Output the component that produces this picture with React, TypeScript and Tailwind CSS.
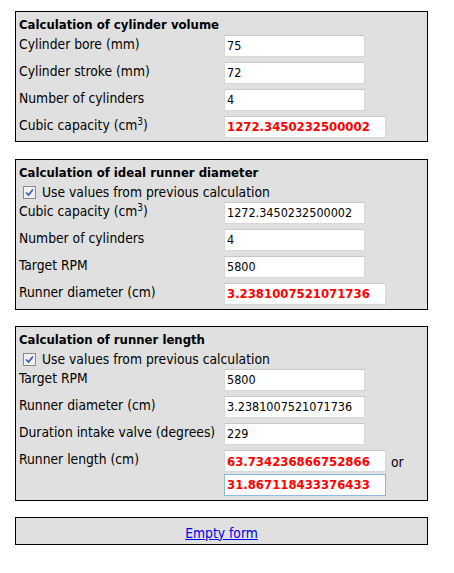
const font = { fontFamily: '"DejaVu Sans Condensed", "Noto Sans", sans-serif' }

type Row = { label: React.ReactNode; value: string; result?: boolean }

function Cm3({ text }: { text: string }) {
    return (
        <>
            {text} (cm<span className="relative -top-[5px] text-[10px] leading-none">3</span>)
        </>
    )
}

function Field({ value, result, focused }: { value: string; result?: boolean; focused?: boolean }) {
    return (
        <div
            className={`h-[22px] flex items-center pl-[2px] bg-white border ${
                focused ? 'border-[#8fb8e0]' : 'border-[#d8d8d8] border-t-[#c8c8c8]'
            } ${result ? 'w-[162px] text-[#ff0000] font-bold text-[13px]' : 'w-[141px] text-black text-[12.5px]'}`}
        >
            {value}
        </div>
    )
}

function Checkbox({ label }: { label: string }) {
    return (
        <div className="flex items-center h-[19px] pl-[4px]">
            <span className="w-[13px] h-[13px] border border-[#8a8a8a] bg-[#eef0f3] flex items-center justify-center">
                <svg width="9" height="9" viewBox="0 0 9 9">
                    <path d="M1 4.5 L3.5 7 L8 1.5" fill="none" stroke="#3455b8" strokeWidth="1.6" />
                </svg>
            </span>
            <span className="ml-[6px]">{label}</span>
        </div>
    )
}

function Rows({ rows }: { rows: Row[] }) {
    return (
        <div className="flex flex-col gap-[5px]">
            {rows.map((r, i) => (
                <div key={i} className="grid grid-cols-[205px_auto] items-start">
                    <div className="pt-[1px] leading-[16px] whitespace-nowrap">{r.label}</div>
                    <Field value={r.value} result={r.result} />
                </div>
            ))}
        </div>
    )
}

function Box({ children, pb }: { children: React.ReactNode; pb: string }) {
    return <div className={`border border-black bg-[#e0e0e0] pl-[3px] pr-[3px] pt-[2px] ${pb}`}>{children}</div>
}

function Title({ text }: { text: string }) {
    return <div className="font-bold text-[13px] h-[21px] leading-[21px]">{text}</div>
}

export default function App() {
    return (
        <div style={font} className="text-[13.75px] text-black bg-white w-[454px] h-[573px] pt-[11px] pl-[15px]">
            <div className="w-[413px] flex flex-col">
                {/* Cylinder volume */}
                <Box pb="pb-[3px]">
                    <Title text="Calculation of cylinder volume" />
                    <Rows
                        rows={[
                            { label: 'Cylinder bore (mm)', value: '75' },
                            { label: 'Cylinder stroke (mm)', value: '72' },
                            { label: 'Number of cylinders', value: '4' },
                            { label: <Cm3 text="Cubic capacity" />, value: '1272.3450232500002', result: true },
                        ]}
                    />
                </Box>

                {/* Runner diameter */}
                <div className="mt-[17px]">
                    <Box pb="pb-[4px]">
                        <Title text="Calculation of ideal runner diameter" />
                        <Checkbox label="Use values from previous calculation" />
                        <Rows
                            rows={[
                                { label: <Cm3 text="Cubic capacity" />, value: '1272.3450232500002' },
                                { label: 'Number of cylinders', value: '4' },
                                { label: 'Target RPM', value: '5800' },
                                { label: 'Runner diameter (cm)', value: '3.2381007521071736', result: true },
                            ]}
                        />
                    </Box>
                </div>

                {/* Runner length */}
                <div className="mt-[16px]">
                    <Box pb="pb-[4px]">
                        <Title text="Calculation of runner length" />
                        <Checkbox label="Use values from previous calculation" />
                        <div className="flex flex-col gap-[5px]">
                            <Rows
                                rows={[
                                    { label: 'Target RPM', value: '5800' },
                                    { label: 'Runner diameter (cm)', value: '3.2381007521071736' },
                                    { label: 'Duration intake valve (degrees)', value: '229' },
                                ]}
                            />
                            <div className="grid grid-cols-[205px_auto] items-start">
                                <div className="pt-[1px] leading-[16px]">Runner length (cm)</div>
                                <div className="flex flex-col gap-[1px]">
                                    <div className="flex items-center">
                                        <Field value="63.734236866752866" result />
                                        <span className="ml-[5px] pt-[2px]">or</span>
                                    </div>
                                    <Field value="31.867118433376433" result focused />
                                </div>
                            </div>
                        </div>
                    </Box>
                </div>

                <div className="mt-[16px] border border-black bg-[#e0e0e0] h-[28px] flex items-end justify-center pb-[3px]">
                    <a href="#" className="text-[#0000ee] underline leading-[16px]">
                        Empty form
                    </a>
                </div>
            </div>
        </div>
    )
}
